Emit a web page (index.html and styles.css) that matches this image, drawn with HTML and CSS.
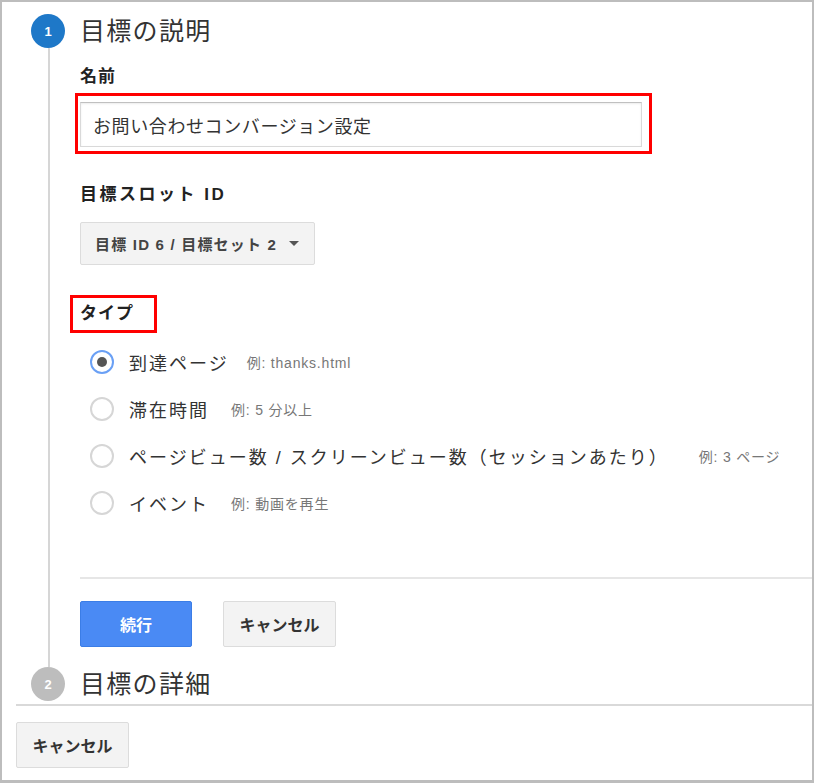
FILE: index.html
```html
<!DOCTYPE html>
<html lang="ja">
<head>
<meta charset="utf-8">
<title>目標の設定</title>
<link rel="stylesheet" href="styles.css">
</head>
<body>
<div class="frame">
  <section class="step">
    <div class="step-head">
      <span class="num num-active">1</span>
      <h2 class="step-title">目標の説明</h2>
    </div>
    <div class="step-body">
      <div class="rail"><span class="rail-line"></span></div>
      <div class="content">
        <div class="label label-name">名前</div>
        <div class="mark mark-input">
          <div class="input">お問い合わせコンバージョン設定</div>
        </div>
        <div class="label label-slot">目標スロット ID</div>
        <button class="dropdown">目標 ID 6 / 目標セット 2<span class="caret"></span></button>
        <div class="mark mark-type"><span class="label">タイプ</span></div>
        <ul class="radios">
          <li class="radio-row"><span class="radio checked"></span><span class="r-label">到達ページ</span><span class="r-ex">例: thanks.html</span></li>
          <li class="radio-row"><span class="radio"></span><span class="r-label">滞在時間</span><span class="r-ex ex-2">例: 5 分以上</span></li>
          <li class="radio-row"><span class="radio"></span><span class="r-label">ページビュー数 / スクリーンビュー数（セッションあたり）</span><span class="r-ex ex-3">例: 3 ページ</span></li>
          <li class="radio-row"><span class="radio"></span><span class="r-label">イベント</span><span class="r-ex ex-2">例: 動画を再生</span></li>
        </ul>
        <hr class="divider">
        <div class="actions">
          <button class="btn btn-primary">続行</button>
          <button class="btn">キャンセル</button>
        </div>
      </div>
    </div>
  </section>
  <section class="step step-2">
    <div class="step-head">
      <span class="num num-idle">2</span>
      <h2 class="step-title">目標の詳細</h2>
    </div>
  </section>
  <footer class="footer">
    <button class="btn">キャンセル</button>
  </footer>
</div>
</body>
</html>
```

FILE: styles.css
```css
* { box-sizing: border-box; }
html, body { margin: 0; padding: 0; background: #fff; }
body {
  font-family: "Liberation Sans", "Noto Sans CJK JP", sans-serif;
  color: #333;
}
.frame {
  width: 814px;
  height: 783px;
  border: 2px solid #bdbdbd;
  border-bottom-width: 3px;
  background: #fff;
  padding-top: 12px;
  overflow: hidden;
}
.step-head {
  display: flex;
  align-items: center;
  height: 34px;
}
.num {
  width: 34px;
  height: 34px;
  border-radius: 50%;
  margin-left: 29px;
  display: flex;
  align-items: center;
  justify-content: center;
  color: #fff;
  font-size: 13px;
  font-weight: bold;
  flex: none;
}
.num-active { background: #1e78c8; }
.num-idle { background: #bdbdbd; }
.step-title {
  margin: 0 0 0 15px;
  font-weight: normal;
  font-size: 25px;
  letter-spacing: 1.3px;
  color: #333;
  line-height: 34px;
}
.step-body {
  display: grid;
  grid-template-columns: 78px 1fr;
}
.rail { display: flex; }
.rail-line {
  width: 2px;
  margin-left: 46px;
  background: #d6d6d6;
}
.content {
  padding-bottom: 20px;
}
.label {
  font-weight: bold;
  font-size: 17px;
  line-height: 20px;
  color: #222;
  letter-spacing: 1px;
}
.label-name { margin-top: 19px; }
.mark {
  border: 3px solid #f00;
}
.mark-input {
  margin-top: 6px;
  margin-left: -5px;
  width: 577px;
  height: 61px;
  padding: 6px 7px 4px 2px;
}
.input {
  height: 45px;
  border: 1px solid #d9d9d9;
  border-top-color: #c0c0c0;
  box-shadow: inset 0 1px 2px rgba(0,0,0,0.08);
  padding-left: 12px;
  display: flex;
  align-items: center;
  font-size: 18px;
  letter-spacing: 0.6px;
  color: #333;
}
.label-slot { margin-top: 31px; letter-spacing: 2.5px; }
.dropdown {
  display: flex;
  align-items: center;
  margin-top: 17px;
  width: 235px;
  height: 43px;
  padding: 0 0 0 14px;
  border: 1px solid #dcdcdc;
  border-radius: 2px;
  background: #f3f3f3;
  font-family: inherit;
  font-weight: bold;
  font-size: 15px;
  color: #444;
  letter-spacing: 1.2px;
}
.caret {
  margin-left: 12px;
  width: 0;
  height: 0;
  border-left: 5px solid transparent;
  border-right: 5px solid transparent;
  border-top: 5px solid #555;
}
.mark-type {
  margin-top: 30px;
  margin-left: -10px;
  width: 87px;
  height: 38px;
  padding-left: 7px;
  display: flex;
  align-items: center;
}
.radios {
  list-style: none;
  margin: 5px 0 0;
  padding: 0;
}
.radio-row {
  height: 47px;
  display: flex;
  align-items: center;
  white-space: nowrap;
}
.radio {
  flex: none;
  width: 24px;
  height: 24px;
  margin-left: 10px;
  margin-right: 15px;
  border-radius: 50%;
  border: 2px solid #d6d6d6;
  background: #fff;
  display: flex;
  align-items: center;
  justify-content: center;
}
.radio.checked { border-color: #6aa0f5; }
.radio.checked::after {
  content: "";
  width: 10px;
  height: 10px;
  border-radius: 50%;
  background: #555;
}
.r-label {
  font-size: 18px;
  letter-spacing: 2px;
  color: #333;
}
.r-ex {
  margin-left: 18px;
  font-size: 14px;
  letter-spacing: 0.8px;
  color: #777;
}
.ex-2 { margin-left: 22px; }
.ex-3 { margin-left: 30px; }
.divider {
  margin: 51px 0 0;
  border: 0;
  height: 2px;
  background: #e6e6e6;
}
.actions {
  display: flex;
  gap: 31px;
  margin-top: 22px;
}
.btn {
  height: 46px;
  width: 113px;
  border: 1px solid #dcdcdc;
  border-radius: 2px;
  background: #f3f3f3;
  font-family: inherit;
  font-weight: bold;
  font-size: 16px;
  color: #333;
  padding: 0;
}
.btn-primary {
  width: 112px;
  background: #4a8af4;
  border-color: #3b7de6;
  color: #fff;
}
.footer {
  margin-top: 3px;
  margin-left: 14px;
  border-top: 2px solid #d9d9d9;
  padding-top: 16px;
}
```
